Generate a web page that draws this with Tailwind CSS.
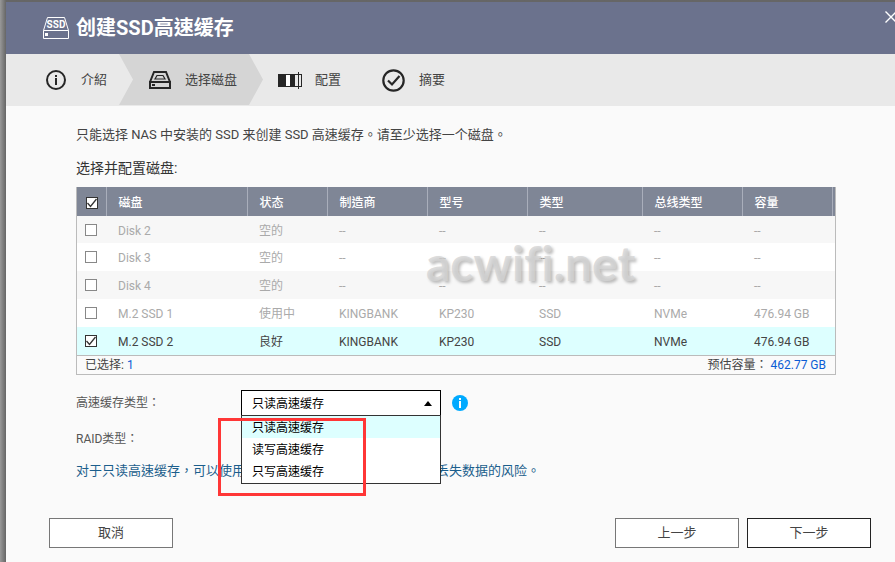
<!DOCTYPE html>
<html lang="zh-Hant">
<head>
    <meta charset="UTF-8">
    <meta name="viewport" content="width=device-width, initial-scale=1.0">
    <title>创建SSD高速缓存</title>
    <script src="https://cdn.jsdelivr.net/npm/@tailwindcss/browser@4"></script>
</head>
<body class="min-h-screen overflow-hidden bg-linear-to-r from-[#999999] to-[#666666] to-[6px] pt-0.5 pl-1.5 font-[Roboto,'Noto_Sans_CJK_TC',sans-serif] text-[13px] text-[#444444]">
    <div class="flex min-h-screen flex-col bg-[#fafafa]">
        <header class="relative flex h-[52px] items-center gap-[7px] bg-[#6b728d] pl-[37px] text-white">
            <svg class="h-[22px] w-[26px]" viewBox="0 0 26 22" fill="none" stroke="currentColor">
                <path d="M.5 13.5V21.5H25.5V13.5ZM.5 13.5 4.5.5H21.5L25.5 13.5"/>
                <path d="M2 16h3v3H2z" fill="currentColor" stroke="none"/>
                <text x="13" y="11" text-anchor="middle" fill="currentColor" stroke="none" font-size="10" font-weight="700">SSD</text>
            </svg>
            <h1 class="text-xl leading-7 font-bold">创建SSD高速缓存</h1>
            <button type="button" aria-label="关闭" class="absolute top-[9px] -right-0.5">
                <svg class="size-3" viewBox="0 0 12 12" fill="none" stroke="currentColor" stroke-width="1.4">
                    <path d="M.5.5l11 11M11.5.5l-11 11"/>
                </svg>
            </button>
        </header>

        <!-- langkah -->
        <ol class="flex h-[52px] items-stretch bg-[#e9e9e9]">
            <li class="flex w-[113px] items-center gap-[15px] pl-10">
                <svg class="size-5" viewBox="0 0 20 20" fill="none" stroke="#262626" stroke-width="2">
                    <circle cx="10" cy="10" r="9"/>
                    <path d="M10 8v7M10 5v2"/>
                </svg>
                介紹
            </li>
            <li class="mb-px flex w-36 items-center gap-3.5 bg-[#d5d5d5] pl-[30px] [clip-path:polygon(0_0,130px_0,100%_50%,130px_100%,0_100%,14px_50%)]">
                <svg class="h-[18px] w-[22px]" viewBox="0 0 22 18" fill="none" stroke="#262626" stroke-width="2">
                    <path d="M1 11h20v6H1zM1 11 5 1h12l4 10"/>
                    <path d="M8 4.500h6L16 8H6z" stroke-width="1.2"/>
                    <path d="M3 13h3v2H3z" fill="#262626" stroke="none"/>
                </svg>
                选择磁盘
            </li>
            <li class="flex w-[113px] items-center gap-[13px] pl-[15px]">
                <svg class="h-[17px] w-6" viewBox="0 0 24 17">
                    <path d="M0 2h24v13H0z" fill="#262626"/>
                    <path d="M8 3h4v11H8z" fill="#ffffff"/>
                    <path d="M17 3h1v11h-1zM18 3h2v11h-2zM21 3h2v11h-2z" fill="#e9e9e9"/>
                    <path d="M20 0h1v17h-1z" fill="#262626"/>
                </svg>
                配置
            </li>
            <li class="flex items-center gap-3.5 pl-1.5">
                <svg class="size-[23px]" viewBox="0 0 23 23" fill="none" stroke="#262626" stroke-width="2.2">
                    <circle cx="11.5" cy="11.5" r="10.200"/>
                    <path d="M6 11.500 10 15.500 17.500 7"/>
                </svg>
                摘要
            </li>
        </ol>

        <main class="flex-1 pt-[19px] pr-[59px] pl-[70px]">
            <p class="leading-5">只能选择 NAS 中安装的 SSD 来创建 SSD 高速缓存。请至少选择一个磁盘。</p>
            <h2 class="mt-[13px] text-sm leading-5 text-[#333333]">选择并配置磁盘:</h2>

            <div class="relative mt-[9px] border border-t-0 border-[#bbbbbb] text-xs">
                <table class="w-full table-fixed text-left">
                    <colgroup>
                        <col class="w-[29px]">
                        <col class="w-[141px]">
                        <col class="w-20">
                        <col class="w-[100px]">
                        <col class="w-[100px]">
                        <col class="w-[115px]">
                        <col class="w-[100px]">
                        <col>
                        <col class="w-[3px]">
                    </colgroup>
                    <thead class="bg-[#7f8696] text-white">
                        <tr class="h-[29px] *:border-l *:border-[#a9aebb] *:pt-0.5 *:pl-3 *:font-medium">
                            <th class="border-l-0! pl-[9px]!">
                                <label class="grid size-3 *:col-start-1 *:row-start-1">
                                    <input type="checkbox" checked aria-label="全选" class="peer size-3 appearance-none border border-[#333333] bg-white">
                                    <svg class="invisible size-3 peer-checked:visible" viewBox="0 0 12 12" fill="none" stroke="#333333" stroke-width="1.3"><path d="M1.500 6 4.500 9.500 10.500 2"/></svg>
                                </label>
                            </th>
                            <th>磁盘</th>
                            <th>状态</th>
                            <th>制造商</th>
                            <th>型号</th>
                            <th>类型</th>
                            <th>总线类型</th>
                            <th>容量</th>
                            <th class="pl-0!"></th>
                        </tr>
                    </thead>
                    <tbody id="diskRows"></tbody>
                </table>
                <div class="flex h-[19px] items-center justify-between border-t border-[#bbbbbb] pr-[9px] pl-2 leading-[18px]">
                    <p>已选择: <span class="text-[#0b5cd5]">1</span></p>
                    <p>预估容量&#xFF1A; <span class="text-[#0b5cd5]">462.77 GB</span></p>
                </div>
                <p class="pointer-events-none absolute top-11 left-[349px] font-[Lato,sans-serif] text-5xl leading-[64px] font-bold text-[#d4d4d4]/80 [font-variant-ligatures:none] [text-shadow:2px_2px_3px_#00000040]">acwifi.net</p>
            </div>

            <form class="mt-[15px] text-xs text-[#555555]">
                <div class="flex items-center">
                    <label for="cacheType" class="w-[165px]">高速缓存类型&#xFF1A;</label>
                    <div class="relative w-[200px] text-black">
                        <select id="cacheType" class="block h-[26px] w-full appearance-none border border-black bg-white pt-0.5 pl-2.5">
                            <option>只读高速缓存</option>
                            <option>读写高速缓存</option>
                            <option>只写高速缓存</option>
                        </select>
                        <svg class="pointer-events-none absolute top-[11px] right-[9px] h-[5px] w-2" viewBox="0 0 8 5"><path d="M4 0 8 5H0z"/></svg>
                        <ul role="listbox" aria-label="高速缓存类型" class="absolute top-[25px] left-0 z-10 w-full border border-[#333333] bg-white pb-px leading-6 *:h-[22px] *:pl-2.5">
                            <li role="option" aria-selected="true" class="bg-[#ddffff]">只读高速缓存</li>
                            <li role="option">读写高速缓存</li>
                            <li role="option">只写高速缓存</li>
                        </ul>
                        <div class="pointer-events-none absolute top-7 -left-[23px] z-20 h-[78px] w-[148px] border-3 border-[#ff3636]"></div>
                    </div>
                    <svg class="ml-[11px] size-4" viewBox="0 0 16 16">
                        <circle cx="8" cy="8" r="8" fill="#00aaff"/>
                        <path d="M7 3h2v2H7zM7 6h2v7H7z" fill="#ffffff"/>
                    </svg>
                </div>
                <p class="mt-[13px] leading-5">RAID类型&#xFF1A;</p>
                <p class="mt-3 text-[13px] leading-5 text-[#1b5e8c]">对于只读高速缓存&#xFF0C;可以使用任何 RAID 类型&#xFF0C;因为它不存在会丢失数据的风险。</p>
            </form>
        </main>

        <footer class="flex gap-2 pr-6 pb-4 pl-[43px]">
            <button type="button" class="mr-auto h-[30px] w-[124px] border border-[#777777] bg-white">取消</button>
            <button type="button" class="h-[30px] w-[124px] border border-[#777777] bg-white">上一步</button>
            <button type="button" class="h-[30px] w-[124px] border border-[#222222] bg-white">下一步</button>
        </footer>
    </div>

    <script>
        const disks = [
            ['Disk 2', '空的', '--', '--', '--', '--', '--'],
            ['Disk 3', '空的', '--', '--', '--', '--', '--'],
            ['Disk 4', '空的', '--', '--', '--', '--', '--'],
            ['M.2 SSD 1', '使用中', 'KINGBANK', 'KP230', 'SSD', 'NVMe', '476.94 GB'],
            ['M.2 SSD 2', '良好', 'KINGBANK', 'KP230', 'SSD', 'NVMe', '476.94 GB'],
        ];

        document.getElementById('diskRows').innerHTML = disks.map((disk, i) => {
            const selected = i === 4;
            const rowClass = selected ? 'bg-[#ddffff]' : 'bg-white odd:bg-[#f7f7f7] text-[#aaaaaa]';
            return `
                <tr class="h-7 first:h-[27px] ${rowClass}">
                    <td class="pl-2">
                        <label class="grid size-3 *:col-start-1 *:row-start-1">
                            <input type="checkbox" ${selected ? 'checked' : ''} aria-label="${disk[0]}" class="peer size-3 appearance-none border border-[#888888] bg-white checked:border-[#333333]">
                            <svg class="invisible size-3 peer-checked:visible" viewBox="0 0 12 12" fill="none" stroke="#333333" stroke-width="1.3"><path d="M1.500 6 4.500 9.500 10.500 2"/></svg>
                        </label>
                    </td>
                    ${disk.map((cell) => `<td class="pt-0.5 pl-3">${cell}</td>`).join('')}
                    <td></td>
                </tr>
            `;
        }).join('');
    </script>
</body>
</html>
